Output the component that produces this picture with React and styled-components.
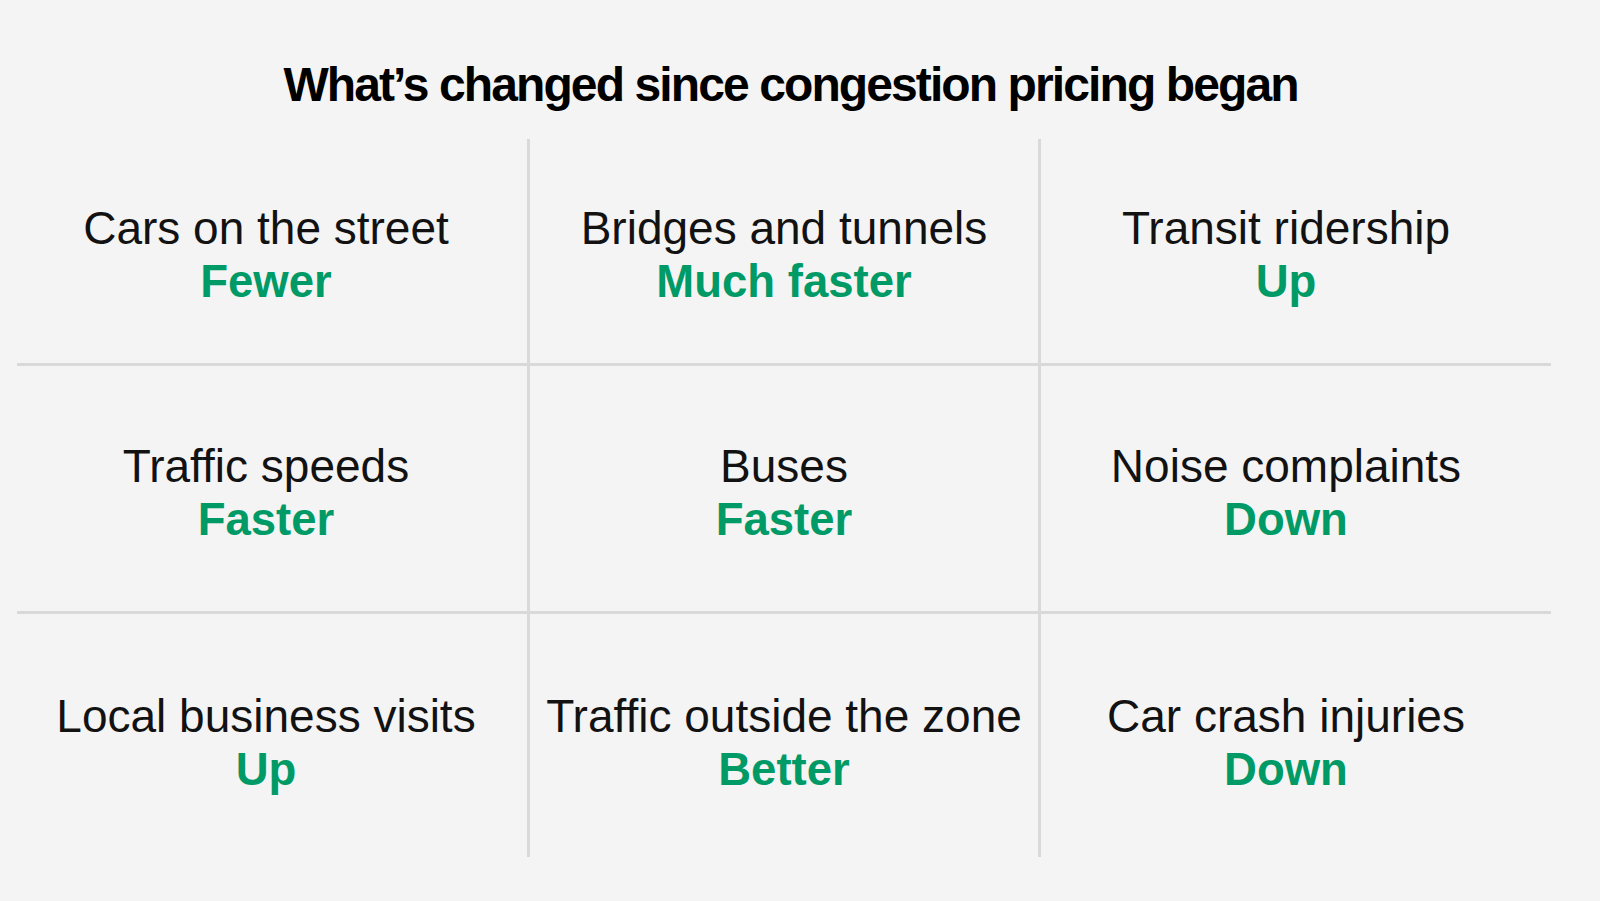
import styled, { createGlobalStyle } from "styled-components";

const GlobalStyle = createGlobalStyle`
  html, body {
    margin: 0;
    padding: 0;
    background: #f4f4f4;
  }
  body {
    font-family: "Liberation Sans", Arial, sans-serif;
    color: #121212;
  }
`;

const Page = styled.div`
  width: 1600px;
  height: 901px;
  background: #f4f4f4;
  overflow: hidden;
`;

const Wrapper = styled.div`
  width: 1534px;
  margin-left: 17px;
`;

const Title = styled.h1`
  margin: 57px 0 26px;
  padding-left: 13px;
  font-size: 48px;
  line-height: 56px;
  font-weight: 700;
  letter-spacing: -1.9px;
  text-align: center;
  color: #000;
`;

const Grid = styled.div`
  display: grid;
  grid-template-columns: 513px 511px 510px;
  grid-template-rows: 227px 248px 243px;
`;

// pad-right nudges the text centre like in the original graphic
const shifts = [12, 0, 20];

const Cell = styled.div`
  box-sizing: border-box;
  display: flex;
  flex-direction: column;
  align-items: center;
  justify-content: center;
  padding-top: ${(props) => (props.$row === 2 ? 14 : 8)}px;
  padding-right: ${(props) => shifts[props.$col]}px;
  border-right: ${(props) => (props.$col < 2 ? "3px solid #d9d9d9" : "none")};
  border-bottom: ${(props) => (props.$row < 2 ? "3px solid #d9d9d9" : "none")};
  text-align: center;
  white-space: nowrap;
`;

const Label = styled.div`
  font-size: 46px;
  line-height: 54px;
  font-weight: 400;
  color: #121212;
`;

const Value = styled.div`
  font-size: 45.5px;
  line-height: 54px;
  font-weight: 700;
  color: #009a66;
`;

const items = [
  ["Cars on the street", "Fewer"],
  ["Bridges and tunnels", "Much faster"],
  ["Transit ridership", "Up"],
  ["Traffic speeds", "Faster"],
  ["Buses", "Faster"],
  ["Noise complaints", "Down"],
  ["Local business visits", "Up"],
  ["Traffic outside the zone", "Better"],
  ["Car crash injuries", "Down"],
];

const App = () => {
  return (
    <Page>
      <GlobalStyle />
      <Wrapper>
        <Title>What’s changed since congestion pricing began</Title>
        <Grid>
          {items.map(([label, value], i) => (
            <Cell key={label} $col={i % 3} $row={Math.floor(i / 3)}>
              <Label>{label}</Label>
              <Value>{value}</Value>
            </Cell>
          ))}
        </Grid>
      </Wrapper>
    </Page>
  );
};

export default App;
